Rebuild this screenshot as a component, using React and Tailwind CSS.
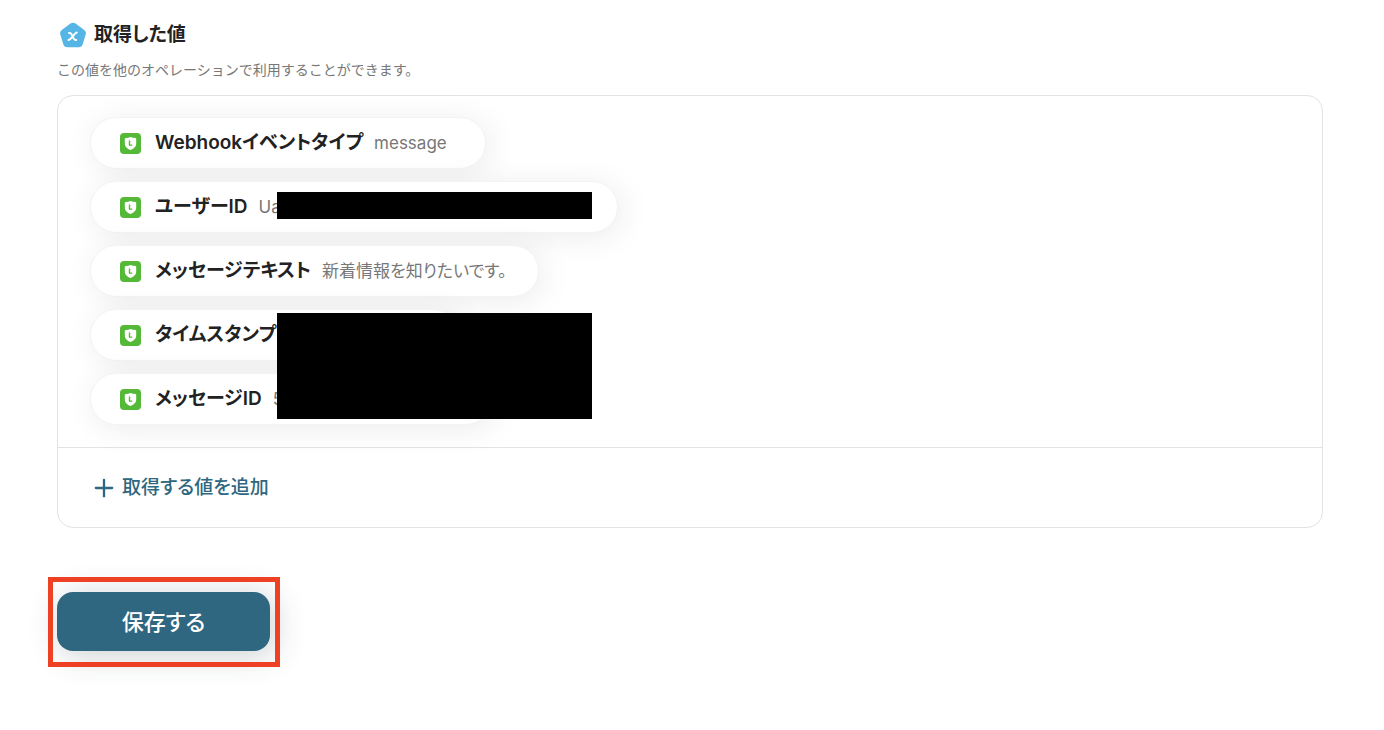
import React from 'react';
import { Plus } from 'lucide-react';

const values = [
  { id: 'event', label: 'Webhookイベントタイプ', value: 'message', width: 'min-w-[396px]' },
  { id: 'user', label: 'ユーザーID', value: 'Ua', width: 'min-w-[528px]' },
  { id: 'text', label: 'メッセージテキスト', value: '新着情報を知りたいです。', width: 'min-w-[449px]' },
  { id: 'time', label: 'タイムスタンプ', value: '', width: 'min-w-[369px]' },
  { id: 'message', label: 'メッセージID', value: '5', width: 'min-w-[402px]' },
];

const ValueIcon = () => (
  <svg viewBox="0 0 26 26" className="w-[26px] h-[26px]" aria-hidden="true">
    <path
      d="M10.4 1.6Q13-.2 15.6 1.6L24.2 7.9Q26.6 9.7 25.7 12.4L22.7 22.2Q21.8 25.2 18.8 25.2H7.2Q4.2 25.2 3.3 22.2L.3 12.4Q-.6 9.7 1.8 7.9Z"
      fill="#55b6e5"
    />
    <path
      d="M9 10.9H9.9C12.3 10.9 12.9 17.9 15.2 17.9H16.2M16.8 10.5C14.6 10.5 11.2 18.2 8.5 18"
      fill="none"
      stroke="white"
      strokeWidth="2"
      strokeLinecap="round"
    />
  </svg>
);

const LineIcon = () => (
  <svg viewBox="0 0 21 21" className="w-[21px] h-[21px] shrink-0" aria-hidden="true">
    <rect width="21" height="21" rx="4" fill="#54b936" />
    <path
      d="M10.5 3.9C9 4.5 7 4.8 5.4 4.9Q4.8 5 4.8 5.7V10.5C4.8 13.7 7.4 15.8 10.5 17C13.6 15.8 16.2 13.7 16.2 10.5V5.7Q16.2 5 15.6 4.9C14 4.8 12 4.5 10.5 3.9Z"
      fill="white"
    />
    <path d="M9.5 7.5V12.1H12.2" fill="none" stroke="#54b936" strokeWidth="1.4" />
  </svg>
);

const ValuePill = ({ label, value, width }) => (
  <li
    className={`${width} flex h-[52px] items-center rounded-full border border-[#f3f3f3] bg-white pl-[29px] pr-7 shadow-[4px_4px_32px_rgba(0,0,0,0.08)]`}
  >
    <LineIcon />
    <span className="ml-[14px] text-[19px] leading-6 font-semibold text-[#222222]">{label}</span>
    <span className="ml-[11px] text-[17px] leading-6 text-[#777777]">{value}</span>
  </li>
);

const App = () => {
  return (
    <main
      lang="ja"
      className="min-h-screen bg-white pt-[22px] pr-[61px] pb-16 pl-[57px] font-['Inter','Noto_Sans_CJK_JP',sans-serif] [font-feature-settings:'palt']"
    >
      <div className="flex items-center gap-2 pl-[3px]">
        <ValueIcon />
        <h1 className="text-[19px] leading-6 font-semibold text-[#222222]">取得した値</h1>
      </div>
      <p className="mt-3 text-[14px] leading-5 text-[#777777] [font-feature-settings:normal]">
        この値を他のオペレーションで利用することができます。
      </p>

      <section className="mt-[15px] rounded-2xl border border-[#e3e3e3]">
        <div className="relative border-b border-[#e3e3e3] pt-[21px] pb-[22px] pl-8">
          <ul className="flex flex-col items-start gap-3">
            {values.map(({ id, ...item }) => (
              <ValuePill key={id} {...item} />
            ))}
          </ul>
          {/* Private values stay masked */}
          <div className="absolute top-24 left-[219px] h-[27px] w-[315px] bg-black" />
          <div className="absolute top-[217px] left-[219px] h-[106px] w-[315px] bg-black" />
        </div>
        <button
          type="button"
          className="flex h-[79px] items-center gap-1 pl-8 text-[19px] leading-6 font-medium text-[#2f6780]"
        >
          <Plus className="h-7 w-7" strokeWidth={2} />
          取得する値を追加
        </button>
      </section>

      <div className="relative mt-16 w-[213px]">
        <button
          type="button"
          className="h-[59px] w-full rounded-2xl bg-[#2f6780] text-[22px] leading-6 font-medium text-white shadow-[4px_4px_32px_rgba(34,52,68,0.24)]"
        >
          保存する
        </button>
        <div className="pointer-events-none absolute -top-[15px] -right-[10px] -bottom-4 -left-[9px] border-5 border-[#ee4023]" />
      </div>
    </main>
  );
};

export default App;
